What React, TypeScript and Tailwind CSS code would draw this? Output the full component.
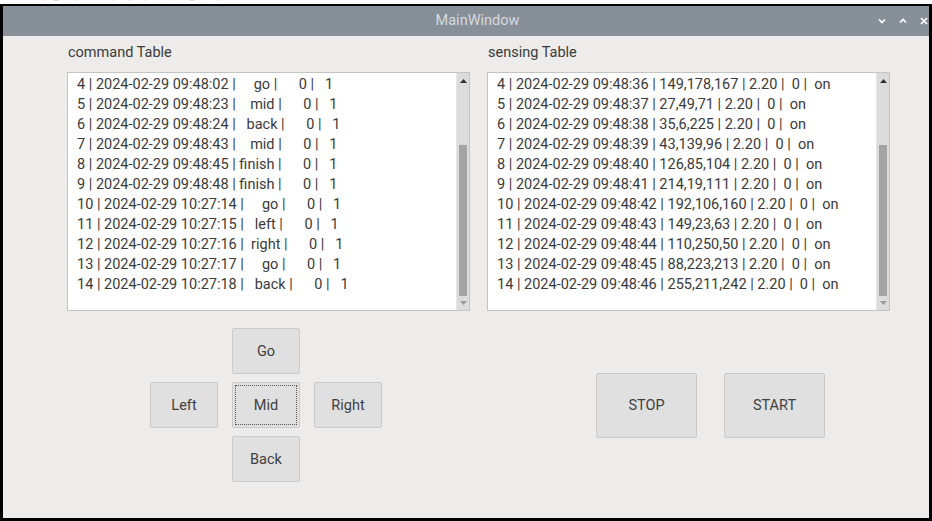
import React from 'react';

const cmdRows: [number, string, string][] = [
  [4, '09:48:02', 'go'],
  [5, '09:48:23', 'mid'],
  [6, '09:48:24', 'back'],
  [7, '09:48:43', 'mid'],
  [8, '09:48:45', 'finish'],
  [9, '09:48:48', 'finish'],
  [10, '10:27:14', 'go'],
  [11, '10:27:15', 'left'],
  [12, '10:27:16', 'right'],
  [13, '10:27:17', 'go'],
  [14, '10:27:18', 'back'],
];

const senseRows: [number, string, string][] = [
  [4, '09:48:36', '149,178,167'],
  [5, '09:48:37', '27,49,71'],
  [6, '09:48:38', '35,6,225'],
  [7, '09:48:39', '43,139,96'],
  [8, '09:48:40', '126,85,104'],
  [9, '09:48:41', '214,19,111'],
  [10, '09:48:42', '192,106,160'],
  [11, '09:48:43', '149,23,63'],
  [12, '09:48:44', '110,250,50'],
  [13, '09:48:45', '88,223,213'],
  [14, '09:48:46', '255,211,242'],
];

const ScrollBar = () => (
  <div className="w-[13px] flex flex-col bg-[#dcdcdc] border-l border-[#e6e6e6]">
    <div className="h-[16px] flex items-center justify-center">
      <svg width="7" height="4" viewBox="0 0 7 4"><path d="M0 4 L3.5 0 L7 4 Z" fill="#333" /></svg>
    </div>
    <div className="h-[56px]" />
    <div className="flex-1 mx-[2px] bg-[#a4a4a4]" />
    <div className="h-[14px] flex items-center justify-center">
      <svg width="7" height="4" viewBox="0 0 7 4"><path d="M0 0 L3.5 4 L7 0 Z" fill="#9a9a9a" /></svg>
    </div>
  </div>
);

const ListBox = ({ lines }: { lines: string[] }) => (
  <div className="h-[239px] flex bg-white border border-[#c4c4c4]">
    <div className="flex-1 pt-[2px] pl-[9px]">
      {lines.map((l) => (
        <div key={l} className="h-[20px] leading-[20px] whitespace-pre text-[14.5px] text-[#3a3a3a]">
          {l}
        </div>
      ))}
    </div>
    <ScrollBar />
  </div>
);

const Btn = ({ label, w, h, focus }: { label: string; w: string; h: string; focus?: boolean }) => (
  <button className={`${w} ${h} p-[2px] rounded-[2px] bg-[#e0e0e0] border border-[#cbcbcb] text-[14.5px] text-[#404040]`}>
    <span className={`w-full h-full flex items-center justify-center pt-[1px] ${focus ? 'border border-dotted border-[#555]' : ''}`}>
      {label}
    </span>
  </button>
);

export default function App() {
  const left = cmdRows.map(
    ([id, t, c]) => `${id} | 2024-02-29 ${t} | ${c.padStart(6)} |      0 |   1`
  );
  const right = senseRows.map(([id, t, rgb]) => `${id} | 2024-02-29 ${t} | ${rgb} | 2.20 |  0 |  on`);

  return (
    <div className="w-[932px] h-[521px] flex flex-col bg-white font-['Roboto',sans-serif]">
      <div className="h-[4px] overflow-hidden">
        <div className="-mt-[16px] pl-[2px] text-[16px] leading-[18px] text-[#777] whitespace-pre">
          30.  사용자 인터페이스 구성 화면
        </div>
      </div>
      <div className="flex-1 flex flex-col border-x-[3px] border-t-[2px] border-b-[3px] border-black bg-[#edecea]">
        <div className="h-[30px] flex items-center bg-[#878f98]">
          <div className="flex-1 pl-[74px] text-center text-[14.5px] text-[#d8dbde]">MainWindow</div>
          <div className="flex items-center gap-[13px] pr-[1px]">
            <svg width="8" height="6" viewBox="0 0 8 6"><path d="M1 1.5 L4 4.5 L7 1.5" stroke="#fff" strokeWidth="1.7" fill="none" /></svg>
            <svg width="8" height="6" viewBox="0 0 8 6"><path d="M1 4.5 L4 1.5 L7 4.5" stroke="#fff" strokeWidth="1.7" fill="none" /></svg>
            <svg width="8" height="8" viewBox="0 0 8 8"><path d="M1 1 L7 7 M7 1 L1 7" stroke="#fff" strokeWidth="1.7" fill="none" /></svg>
          </div>
        </div>

        <div className="flex-1 flex gap-[17px] pl-[64px] pt-[7px]">
          <div className="w-[403px] flex flex-col">
            <div className="h-[20px] leading-[20px] pl-[1px] text-[14.5px] text-[#3a3a3a]">command Table</div>
            <div className="mt-[9px]">
              <ListBox lines={left} />
            </div>
            <div className="mt-[17px] ml-[83px] grid grid-cols-[68px_68px_68px] gap-x-[14px] gap-y-[8px]">
              <div />
              <Btn label="Go" w="w-[68px]" h="h-[46px]" />
              <div />
              <Btn label="Left" w="w-[68px]" h="h-[46px]" />
              <Btn label="Mid" w="w-[68px]" h="h-[46px]" focus />
              <Btn label="Right" w="w-[68px]" h="h-[46px]" />
              <div />
              <Btn label="Back" w="w-[68px]" h="h-[46px]" />
              <div />
            </div>
          </div>

          <div className="w-[403px] flex flex-col">
            <div className="h-[20px] leading-[20px] pl-[1px] text-[14.5px] text-[#3a3a3a]">sensing Table</div>
            <div className="mt-[9px]">
              <ListBox lines={right} />
            </div>
            <div className="mt-[62px] ml-[109px] flex gap-[27px]">
              <Btn label="STOP" w="w-[101px]" h="h-[65px]" />
              <Btn label="START" w="w-[101px]" h="h-[65px]" />
            </div>
          </div>
        </div>
      </div>
    </div>
  );
}
